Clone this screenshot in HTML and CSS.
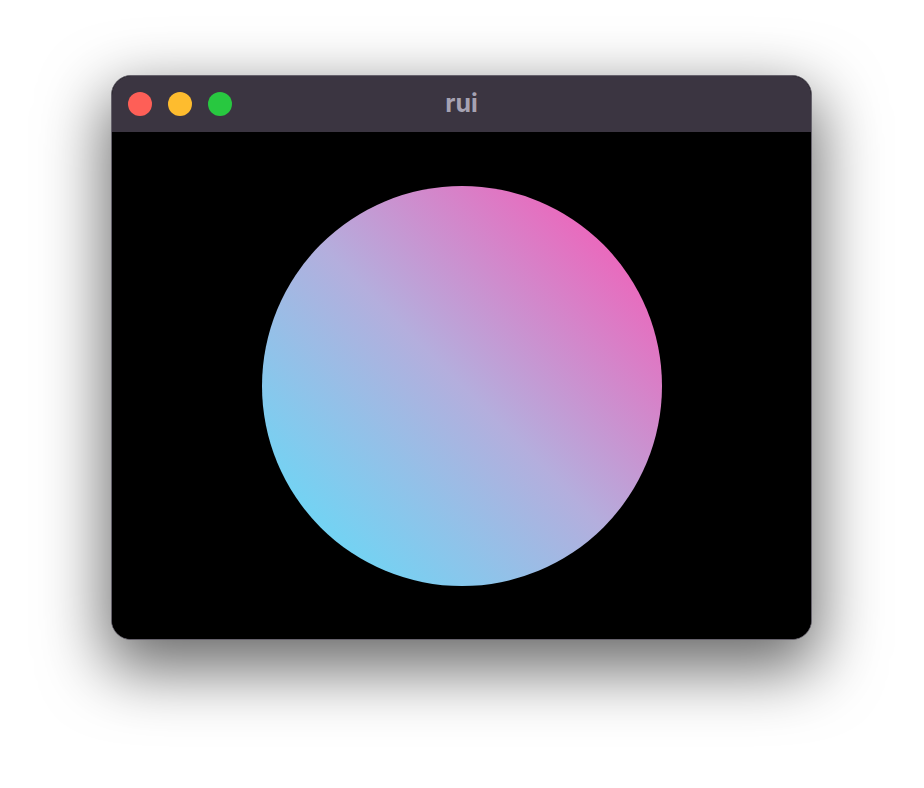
FILE: index.html
```html
<!DOCTYPE html>
<html>
<head>
<meta charset="utf-8">
<link rel="stylesheet" href="styles.css">
</head>
<body>
<div class="window">
  <div class="titlebar">
    <div class="lights">
      <span class="light red"></span>
      <span class="light yellow"></span>
      <span class="light green"></span>
    </div>
    <div class="title">rui</div>
  </div>
  <div class="content">
    <div class="circle"></div>
  </div>
</div>
</body>
</html>
```
FILE: styles.css
```css
html, body {
  margin: 0;
  padding: 0;
  background: #ffffff;
}
body {
  width: 924px;
  height: 788px;
  padding: 75px 0 0 111px;
  box-sizing: border-box;
  overflow: hidden;
}
.window {
  width: 699px;
  height: 563px;
  border: 1px solid #66626c;
  border-radius: 20px;
  overflow: hidden;
  background: #000;
  display: flex;
  flex-direction: column;
  box-shadow: 0 24px 64px 6px rgba(0, 0, 0, 0.58);
}
.titlebar {
  height: 56px;
  flex: 0 0 56px;
  background: #3b3541;
  display: flex;
  align-items: center;
  position: relative;
}
.lights {
  display: flex;
  gap: 16px;
  padding-left: 16px;
  margin-top: -1px;
}
.light {
  width: 24px;
  height: 24px;
  border-radius: 50%;
  display: block;
}
.red { background: #fe5f57; }
.yellow { background: #febc2e; }
.green { background: #28c840; }
.title {
  position: absolute;
  left: 0;
  right: 0;
  top: 0;
  bottom: 0;
  display: flex;
  align-items: center;
  justify-content: center;
  font-family: Inter, "Noto Sans", sans-serif;
  font-weight: 700;
  font-size: 25px;
  color: #a6a2b2;
  padding-bottom: 2px;
}
.content {
  flex: 1;
  display: flex;
  align-items: center;
  justify-content: center;
  background: #000;
}
.circle {
  width: 400px;
  height: 400px;
  border-radius: 50%;
  background: linear-gradient(45deg, #58e2fc 0%, #b4aedd 50%, #ff4eb0 100%);
}
```
